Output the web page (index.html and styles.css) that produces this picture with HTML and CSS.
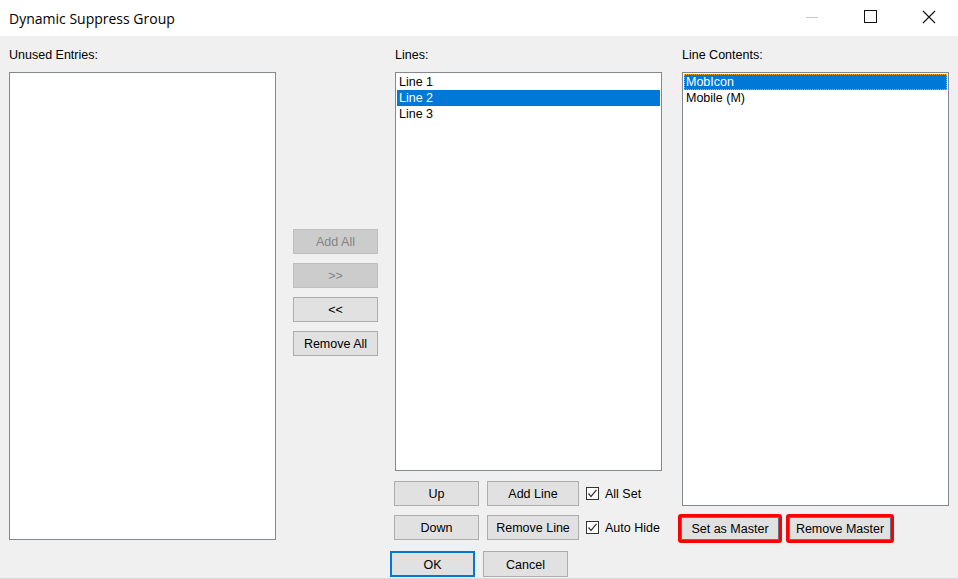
FILE: index.html
```html
<!DOCTYPE html>
<html>
<head>
    <link rel="stylesheet" href="styles.css">
</head>
<body>
    <div class="window">
        <div class="titlebar">
            <span class="title">Dynamic Suppress Group</span>
            <div class="caption-btns">
                <span class="cap-btn">
                    <svg width="58" height="36" viewBox="0 0 58 36"><line x1="22" y1="17.5" x2="34" y2="17.5" stroke="#c8c8c8" stroke-width="1"/></svg>
                </span>
                <span class="cap-btn">
                    <svg width="58" height="36" viewBox="0 0 58 36"><rect x="22.5" y="10.5" width="12" height="12" fill="none" stroke="#111" stroke-width="1"/></svg>
                </span>
                <span class="cap-btn">
                    <svg width="58" height="36" viewBox="0 0 58 36"><path d="M23 11 L35 23 M35 11 L23 23" stroke="#111" stroke-width="1.1" fill="none"/></svg>
                </span>
            </div>
        </div>

        <div class="client">
            <div class="col col-unused">
                <div class="label">Unused Entries:</div>
                <div class="listbox lb-unused"></div>
            </div>

            <div class="col col-move">
                <button class="btn disabled">Add All</button>
                <button class="btn disabled">&gt;&gt;</button>
                <button class="btn">&lt;&lt;</button>
                <button class="btn">Remove All</button>
            </div>

            <div class="col col-lines">
                <div class="label">Lines:</div>
                <div class="listbox lb-lines">
                    <div class="item">Line 1</div>
                    <div class="item selected">Line 2</div>
                    <div class="item">Line 3</div>
                </div>
                <div class="ctrl-row first">
                    <button class="btn btn-updown">Up</button>
                    <button class="btn btn-line">Add Line</button>
                    <label class="check">
                        <span class="box"><svg width="11" height="11" viewBox="0 0 11 11"><path d="M1.5 5.5 L4 8.5 L9.5 1.8" stroke="#333" stroke-width="1.2" fill="none"/></svg></span>
                        All Set
                    </label>
                </div>
                <div class="ctrl-row">
                    <button class="btn btn-updown">Down</button>
                    <button class="btn btn-line">Remove Line</button>
                    <label class="check">
                        <span class="box"><svg width="11" height="11" viewBox="0 0 11 11"><path d="M1.5 5.5 L4 8.5 L9.5 1.8" stroke="#333" stroke-width="1.2" fill="none"/></svg></span>
                        Auto Hide
                    </label>
                </div>
                <div class="dialog-btns">
                    <button class="btn btn-dlg default">OK</button>
                    <button class="btn btn-dlg">Cancel</button>
                </div>
            </div>

            <div class="col col-contents">
                <div class="label">Line Contents:</div>
                <div class="listbox lb-contents">
                    <div class="item selected focused">MobIcon</div>
                    <div class="item">Mobile (M)</div>
                </div>
                <div class="master-row">
                    <span class="highlight"><button class="btn btn-master set">Set as Master</button></span>
                    <span class="highlight"><button class="btn btn-master remove">Remove Master</button></span>
                </div>
            </div>
        </div>
    </div>
</body>
</html>
```

FILE: styles.css
```css
body {
    margin: 0;
    background-color: #f0f0f0;
    font-family: "Liberation Sans", Arial, sans-serif;
    font-size: 12.5px;
    color: #000;
}

.window {
    width: 958px;
    height: 578px;
    border-bottom: 1px solid #dadada;
    overflow: hidden;
}

.titlebar {
    height: 36px;
    background-color: #fff;
    display: flex;
    align-items: center;
    justify-content: space-between;
}

.title {
    padding-left: 9px;
    font-family: "Open Sans", "Liberation Sans", sans-serif;
    font-size: 14px;
    color: #000;
}

.caption-btns {
    display: flex;
    height: 36px;
}

.cap-btn {
    width: 58px;
    height: 36px;
    display: block;
}

.cap-btn svg {
    display: block;
}

.client {
    display: flex;
    align-items: flex-start;
    padding: 10px 0 0 9px;
}

.col {
    display: flex;
    flex-direction: column;
}

.label {
    height: 16px;
    line-height: 18px;
    margin-bottom: 10px;
    white-space: nowrap;
}

.listbox {
    box-sizing: border-box;
    background-color: #fff;
    border: 1px solid #828790;
    padding: 1px;
    width: 267px;
}

.item {
    height: 16px;
    line-height: 17px;
    padding-left: 2px;
    box-sizing: border-box;
}

.item.selected {
    background-color: #0078d7;
    color: #fff;
}

.item.focused {
    border: 1px dotted #f5a623;
    padding-left: 1px;
    line-height: 15px;
}

.col-unused {
    margin-right: 17px;
}

.lb-unused {
    height: 468px;
}

.col-move {
    margin-top: 183px;
    margin-right: 17px;
    gap: 9px;
}

.btn {
    box-sizing: border-box;
    font-family: "Liberation Sans", Arial, sans-serif;
    font-size: 12.5px;
    color: #000;
    background-color: #e1e1e1;
    border: 1px solid #adadad;
    height: 25px;
    width: 85px;
    padding: 1px 0 0 0;
    margin: 0;
}

.btn.disabled {
    background-color: #cccccc;
    border-color: #bfbfbf;
    color: #838383;
}

.col-lines {
    margin-right: 20px;
    width: 267px;
}

.lb-lines {
    height: 399px;
}

.ctrl-row {
    display: flex;
    align-items: center;
    margin-top: 9px;
    margin-left: -1px;
    gap: 8px;
}

.ctrl-row.first {
    margin-top: 10px;
}

.btn-line {
    width: 92px;
}

.check {
    display: flex;
    align-items: center;
    gap: 6px;
    margin-left: -1px;
    white-space: nowrap;
}

.check .box {
    box-sizing: border-box;
    width: 13px;
    height: 13px;
    border: 1px solid #333;
    background-color: #fff;
    display: block;
}

.check .box svg {
    display: block;
}

.dialog-btns {
    display: flex;
    gap: 8px;
    margin-top: 11px;
    margin-left: -5px;
}

.btn-dlg {
    height: 26px;
}

.btn-dlg.default {
    border: 2px solid #0078d7;
}

.col-contents {
    width: 267px;
}

.lb-contents {
    height: 434px;
}

.master-row {
    display: flex;
    gap: 4px;
    margin-top: 8px;
    margin-left: -4px;
}

.highlight {
    display: block;
    border: 3px solid #ff0000;
    border-radius: 3px;
}

.btn-master {
    display: block;
    height: 23px;
    border-color: #6d6d80;
}

.btn-master.set { width: 98px; }
.btn-master.remove { width: 102px; }
```
